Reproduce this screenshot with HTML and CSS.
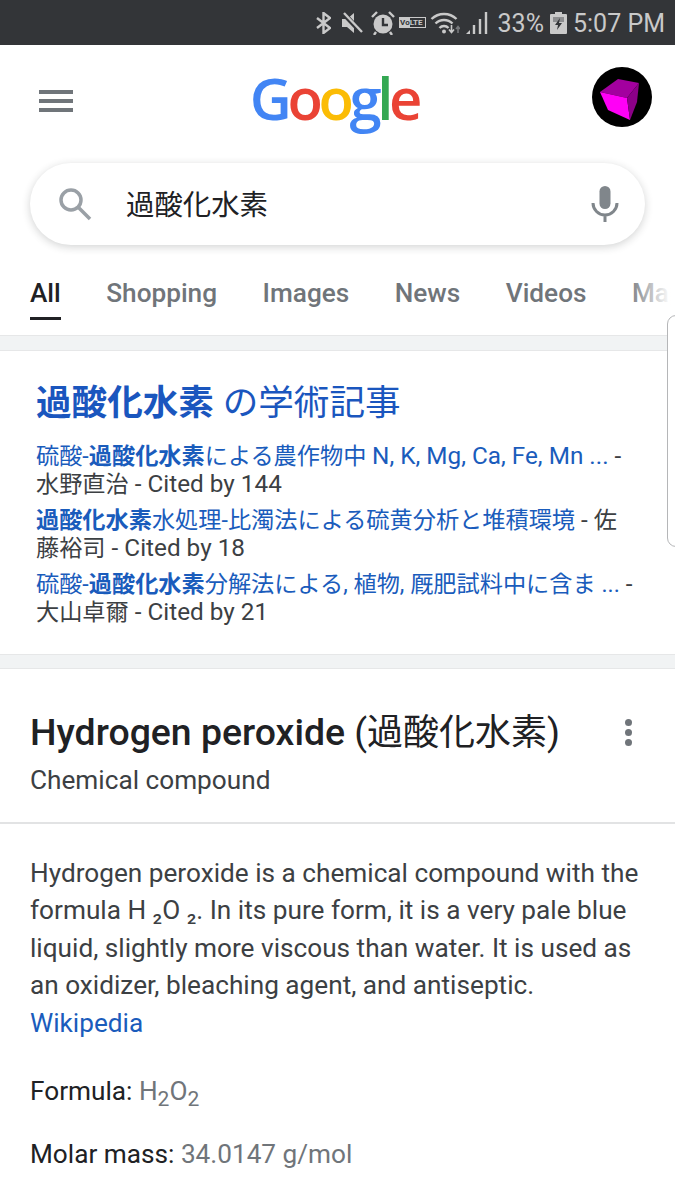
FILE: index.html
```html
<!DOCTYPE html>
<html>
<head>
  <title>過酸化水素 - Google Search</title>
  <link rel="stylesheet" href="styles.css">
</head>
<body>
  <!-- phone status bar -->
  <div class="statusBar">
    <svg class="sIcon btIcon" width="15" height="22" viewBox="0 0 15 22"><path d="M1 6l13 10-6.500 5V1L14 6 1 16" fill="none" stroke="#c9c9c9" stroke-width="2.400"/></svg>
    <svg class="sIcon muteIcon" width="22" height="22" viewBox="0 0 22 22"><path d="M1 7h5l7-6v20l-7-6H1z" fill="#c9c9c9"/><path d="M2 1l19 20" stroke="#333538" stroke-width="5"/><path d="M3 1l18 19" stroke="#c9c9c9" stroke-width="2.400"/></svg>
    <svg class="sIcon alarmIcon" width="24" height="24" viewBox="0 0 24 24"><circle cx="12" cy="13" r="9.500" fill="#c9c9c9"/><path d="M12 7v7h5" fill="none" stroke="#333538" stroke-width="2.400"/><path d="M1 6l5-5M23 6l-5-5M5 21l-2 3M19 21l2 3" stroke="#c9c9c9" stroke-width="2.400"/></svg>
    <span class="volte"><span class="vo">Vo</span>LTE</span>
    <svg class="sIcon" width="30" height="24" viewBox="0 0 30 24"><path d="M1.500 8a18 18 0 0 1 25 0M5.500 12.500a12 12 0 0 1 17 0M9.500 17a6 6 0 0 1 9 0" fill="none" stroke="#c9c9c9" stroke-width="2.400"/><circle cx="14" cy="20.500" r="2" fill="#c9c9c9"/><path d="M21.500 14v7m-2.500-2.500l2.500 3 2.500-3" fill="none" stroke="#c9c9c9" stroke-width="1.600"/><path d="M28 22v-6m-2 2l2-2.500 2 2.500" fill="none" stroke="#77797c" stroke-width="1.600"/></svg>
    <svg class="sIcon" width="22" height="24" viewBox="0 0 22 24"><path d="M0 23l4-4v4z" fill="#c9c9c9"/><path d="M8 23v-9M14 23V8M20 23V1" stroke="#c9c9c9" stroke-width="2.400"/></svg>
    <span class="sText">33%</span>
    <svg class="sIcon" width="17" height="22" viewBox="0 0 17 22"><path d="M5 0h7v2h4a1 1 0 0 1 1 1v18a1 1 0 0 1-1 1H1a1 1 0 0 1-1-1V3a1 1 0 0 1 1-1h4z" fill="#c9c9c9"/><path d="M3 5h11v5H3z" fill="#8c8d8f"/><path d="M10 6l-5 7h3l-1 5 5-7H9z" fill="#333538"/></svg>
    <span class="sText timeText">5:07 PM</span>
  </div>

  <div class="top">
    <div class="header">
      <div class="menuBtn"><span></span><span></span><span></span></div>
      <div class="logo"><span class="lBlue">G</span><span class="lRed">o</span><span class="lYellow">o</span><span class="lBlue">g</span><span class="lGreen">l</span><span class="lRed">e</span></div>
      <svg class="avatar" width="60" height="60" viewBox="0 0 60 60">
        <circle cx="30" cy="30" r="30" fill="#000"/>
        <polygon points="8,25 26,12 47,16 35,31" fill="#a3009f"/>
        <polygon points="8,25 35,31 38,53 16,43" fill="#ff00f6"/>
        <polygon points="35,31 47,16 45,35 38,53" fill="#8c0088"/>
      </svg>
    </div>

    <div class="searchBox">
      <svg width="34" height="34" viewBox="0 0 34 34"><circle cx="13" cy="13" r="10" fill="none" stroke="#9aa0a6" stroke-width="3.500"/><path d="M20 20l12 12" stroke="#9aa0a6" stroke-width="3.500"/></svg>
      <span class="query">過酸化水素</span>
      <svg width="28" height="36" viewBox="0 0 28 36"><rect x="8.500" y="0" width="11" height="23" rx="5.500" fill="#80868b"/><path d="M2 17a12 12 0 0 0 24 0M14 29v7" fill="none" stroke="#80868b" stroke-width="3"/></svg>
    </div>

    <div class="tabs">
      <span class="tab active">All</span>
      <span class="tab">Shopping</span>
      <span class="tab">Images</span>
      <span class="tab">News</span>
      <span class="tab">Videos</span>
      <span class="tab">Maps</span>
      <div class="tabFade"></div>
    </div>
  </div>

  <div class="card scholar">
    <h3 class="scholarTitle"><b>過酸化水素</b> の学術記事</h3>
    <p class="article"><a>硫酸-<b>過酸化水素</b>による農作物中 <span class="lat">N, K, Mg, Ca, Fe, Mn ...</span></a><span class="lat"> - </span>水野直治<span class="lat"> - Cited by 144</span></p>
    <p class="article"><a><b>過酸化水素</b>水処理-比濁法による硫黄分析と堆積環境</a><span class="lat"> - </span>佐藤裕司<span class="lat"> - Cited by 18</span></p>
    <p class="article"><a>硫酸-<b>過酸化水素</b>分解法による, 植物, 厩肥試料中に含ま ...</a><span class="lat"> - </span>大山卓爾<span class="lat"> - Cited by 21</span></p>
  </div>

  <div class="panel">
    <div class="panelHead">
      <div class="titleRow">
        <h2 class="panelTitle"><b>Hydrogen peroxide</b> (<span class="titleCjk">過酸化水素</span>)</h2>
        <div class="dots"><span></span><span></span><span></span></div>
      </div>
      <div class="panelSub">Chemical compound</div>
    </div>
    <div class="panelBody">
      <p class="desc">Hydrogen peroxide is a chemical compound with the formula H ₂O ₂. In its pure form, it is a very pale blue liquid, slightly more viscous than water. It is used as an oxidizer, bleaching agent, and antiseptic. <a>Wikipedia</a></p>
      <p class="fact">Formula: <span class="val">H<sub>2</sub>O<sub>2</sub></span></p>
      <p class="fact">Molar mass: <span class="val">34.0147 g/mol</span></p>
    </div>
  </div>

  <div class="scrollHandle"></div>
</body>
</html>
```

FILE: styles.css
```css
html, body { margin: 0; padding: 0; }
body { width: 675px; height: 1200px; overflow: hidden; position: relative; background: #f1f3f4; font-family: Roboto, "Noto Sans CJK JP", sans-serif; color: #202124; }
h2, h3, p { margin: 0; font-weight: 400; }

.statusBar { height: 45px; background: #333538; display: flex; align-items: center; justify-content: flex-end; padding-right: 10px; color: #c9c9c9; box-sizing: border-box; }
.sIcon { display: block; margin-right: 6px; }
.btIcon { margin-right: 10px; }
.muteIcon { margin-right: 8px; }
.alarmIcon { margin-right: 4px; }
.sText { font-size: 25px; margin: 2px 6px 0 4px; }
.timeText { margin: 2px 0 0 0; }
.volte { display: flex; align-items: center; height: 9px; margin-right: 4px; padding-right: 2px; border: 1px solid #c9c9c9; font-size: 8px; font-weight: 700; line-height: 9px; }
.vo { background: #c9c9c9; color: #333538; }

.top { background: #fff; height: 291px; border-bottom: 1px solid #e6e7e8; box-sizing: border-box; }
.header { height: 104px; display: grid; grid-template-columns: 1fr auto 1fr; align-items: center; padding: 0 23px; }
.menuBtn { width: 34px; margin: 8px 0 0 16px; display: flex; flex-direction: column; gap: 5px; }
.menuBtn span { display: block; height: 4px; background: #70757a; }
.logo { font-family: "Open Sans", sans-serif; font-size: 58px; font-weight: 600; line-height: 60px; letter-spacing: -4.400px; margin: 2px 0 0 -7px; }
.lBlue { color: #4285f4; }
.lRed { color: #ea4335; }
.lYellow { color: #fbbc05; }
.lGreen { color: #34a853; }
.avatar { justify-self: end; }

.searchBox { margin: 14px 30px 0; height: 82px; border-radius: 41px; background: #fff; box-shadow: 0 2px 8px rgba(32, 33, 36, .2); display: flex; align-items: center; padding: 0 26px 0 28px; }
.query { flex: 1; margin: -4px 0 0 34px; font-size: 28.400px; color: #202124; }

.tabs { position: relative; display: flex; gap: 45.500px; padding-left: 30px; margin-top: 30px; overflow: hidden; }
.tab { font-size: 26.200px; font-weight: 500; color: #70757a; line-height: 37px; padding-bottom: 5px; white-space: nowrap; }
.tab.active { color: #202124; border-bottom: 3px solid #202124; }
.tabFade { position: absolute; top: 0; right: 0; width: 44px; height: 40px; background: linear-gradient(to right, rgba(255, 255, 255, .1), #fff 90%); }

.card { background: #fff; border-top: 1px solid #e6e7e8; border-bottom: 1px solid #e6e7e8; }
.scholar { margin-top: 14px; height: 305px; box-sizing: border-box; padding: 29px 36px 0; }
.scholarTitle { font-size: 35.600px; line-height: 46px; color: #1a56be; margin-bottom: 15.500px; }
.scholarTitle b, .article b { font-weight: 700; }
.article { font-size: 23.200px; line-height: 28.500px; margin-bottom: 7px; color: #3c4043; }
.article a { color: #1a5cbc; }
.lat { font-size: 24.300px; }

.panel { margin-top: 13px; height: 532px; box-sizing: border-box; background: #fff; border-top: 1px solid #e6e7e8; }
.panelHead { height: 155px; box-sizing: border-box; border-bottom: 2px solid #e2e3e4; padding: 40px 30px 0; }
.titleRow { display: flex; justify-content: space-between; align-items: center; }
.panelTitle { font-size: 37.400px; line-height: 46px; color: #202124; }
.panelTitle b { font-weight: 500; }
.titleCjk { font-size: 36px; }
.dots { display: flex; flex-direction: column; gap: 3px; margin-right: 13px; }
.dots span { display: block; width: 7px; height: 7px; border-radius: 50%; background: #70757a; }
.panelSub { font-size: 26.200px; line-height: 34px; margin-top: 7px; color: #3c4043; }

.panelBody { padding: 31px 30px 0; }
.desc { font-size: 26.200px; line-height: 37.400px; color: #3c4043; }
.desc a { color: #1a5cbc; }
.fact { font-size: 26.200px; line-height: 36px; margin-top: 27px; color: #202124; }
.fact:nth-child(2) { margin-top: 31px; }
.val { color: #70757a; }
.val sub { font-size: 21px; line-height: 0; vertical-align: -6px; }

.scrollHandle { position: absolute; top: 315px; right: -12px; width: 20px; height: 232px; background: #fff; border: 1px solid #b5b6b8; border-radius: 9px; box-sizing: border-box; }
```
